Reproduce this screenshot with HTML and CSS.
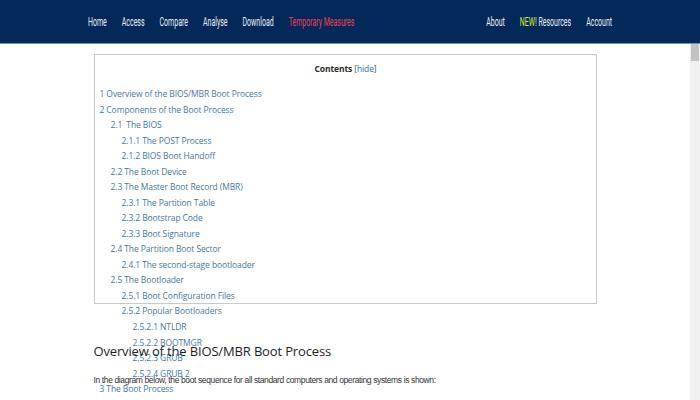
FILE: index.html
```html
<!DOCTYPE html>
<html lang="en">
<head>
<meta charset="utf-8">
<title>Overview of the BIOS/MBR Boot Process</title>
<link rel="stylesheet" href="styles.css">
</head>
<body>
<header class="topbar">
  <nav class="nav">
    <ul class="nav-group">
      <li><a href="#">Home</a></li>
      <li><a href="#">Access</a></li>
      <li><a href="#">Compare</a></li>
      <li><a href="#">Analyse</a></li>
      <li><a href="#">Download</a></li>
      <li><a href="#" class="nav-alert">Temporary Measures</a></li>
    </ul>
    <ul class="nav-group">
      <li><a href="#">About</a></li>
      <li><a href="#"><span class="nav-new">NEW!</span> Resources</a></li>
      <li><a href="#">Account</a></li>
    </ul>
  </nav>
</header>
<div class="workspace">
  <main class="scroller">
    <article class="article">
      <div class="toc">
        <div class="toc-title"><b>Contents</b> <span class="toc-toggle">[<a href="#">hide</a>]</span></div>
        <ul class="toc-list">
          <li class="l1"><a href="#">1 Overview of the BIOS/MBR Boot Process</a></li>
          <li class="l1"><a href="#">2 Components of the Boot Process</a></li>
          <li class="l2"><a href="#">2.1&nbsp; The BIOS</a></li>
          <li class="l3"><a href="#">2.1.1 The POST Process</a></li>
          <li class="l3"><a href="#">2.1.2 BIOS Boot Handoff</a></li>
          <li class="l2"><a href="#">2.2 The Boot Device</a></li>
          <li class="l2"><a href="#">2.3 The Master Boot Record (MBR)</a></li>
          <li class="l3"><a href="#">2.3.1 The Partition Table</a></li>
          <li class="l3"><a href="#">2.3.2 Bootstrap Code</a></li>
          <li class="l3"><a href="#">2.3.3 Boot Signature</a></li>
          <li class="l2"><a href="#">2.4 The Partition Boot Sector</a></li>
          <li class="l3"><a href="#">2.4.1 The second-stage bootloader</a></li>
          <li class="l2"><a href="#">2.5 The Bootloader</a></li>
          <li class="l3"><a href="#">2.5.1 Boot Configuration Files</a></li>
          <li class="l3"><a href="#">2.5.2 Popular Bootloaders</a></li>
          <li class="l4"><a href="#">2.5.2.1 NTLDR</a></li>
          <li class="l4"><a href="#">2.5.2.2 BOOTMGR</a></li>
          <li class="l4"><a href="#">2.5.2.3 GRUB</a></li>
          <li class="l4"><a href="#">2.5.2.4 GRUB 2</a></li>
          <li class="l1"><a href="#">3 The Boot Process</a></li>
        </ul>
      </div>
      <h1 class="section-title">Overview of the BIOS/MBR Boot Process</h1>
      <p class="body-text">In the diagram below, the boot sequence for all standard computers and operating systems is shown:</p>
    </article>
  </main>
  <div class="scrollbar" aria-hidden="true"><div class="scrollbar-thumb"></div></div>
</div>
</body>
</html>
```

FILE: styles.css
```css
html, body {
  margin: 0;
  padding: 0;
  height: 100%;
  overflow: hidden;
  background: #ffffff;
}

body {
  display: flex;
  flex-direction: column;
  font-family: "Open Sans", "DejaVu Sans", sans-serif;
}

a {
  text-decoration: none;
  color: inherit;
}

/* ---------- top navigation ---------- */
.topbar {
  flex: 0 0 auto;
  height: 43px;
  background: #03295a;
  border-bottom: 1px solid #6f8fb3;
  display: flex;
  justify-content: center;
  overflow: hidden;
}

.nav {
  flex: 0 0 976px;
  display: flex;
  justify-content: space-between;
  align-items: center;
  transform: scaleX(0.537);
  transform-origin: 50% 50%;
  font-family: Roboto, "Liberation Sans", sans-serif;
  font-size: 13px;
  color: #e9eef4;
}

.nav-group {
  list-style: none;
  margin: 0;
  padding: 0;
  display: flex;
  gap: 28px;
}

.nav-alert {
  color: #e9414f;
}

.nav-new {
  color: #d6ec3c;
}

/* ---------- content area + scrollbar ---------- */
.workspace {
  flex: 1 1 auto;
  display: flex;
  min-height: 0;
}

.scroller {
  flex: 1 1 auto;
  overflow: hidden;
}

.scrollbar {
  flex: 0 0 10px;
  background: #f0f0f0;
}

.scrollbar-thumb {
  height: 17px;
  margin: 0 1px;
  background: #c2c2c2;
}

.article {
  width: 503px;
  margin: 0 auto;
  padding-top: 10px;
}

/* ---------- table of contents ---------- */
.toc {
  box-sizing: border-box;
  height: 250px;
  border: 1px solid #c9c9c9;
  padding: 6px 4px 0 5px;
  font-size: 8.5px;
  letter-spacing: -0.1px;
}

.toc-title {
  text-align: center;
  color: #2b2b2b;
  line-height: 15px;
  margin-bottom: 10px;
}

.toc-title b {
  font-weight: 700;
}

.toc-toggle {
  color: #555;
}

.toc-toggle a {
  color: #3c6f9e;
}

.toc-list {
  list-style: none;
  margin: 0;
  padding: 0;
}

.toc-list li {
  line-height: 15.53px;
  color: #3f7aa5;
  white-space: nowrap;
}

.toc-list .l2 { padding-left: 11px; }
.toc-list .l3 { padding-left: 22px; }
.toc-list .l4 { padding-left: 33px; }

/* ---------- article text ---------- */
.section-title {
  margin: 38px 0 0;
  font-size: 13px;
  font-weight: 400;
  line-height: 18px;
  letter-spacing: -0.15px;
  color: #1e1e1e;
}

.body-text {
  margin: 14px 0 0;
  font-family: "Liberation Sans", Arial, sans-serif;
  font-size: 8.5px;
  line-height: 12px;
  letter-spacing: -0.38px;
  color: #333;
}
```
